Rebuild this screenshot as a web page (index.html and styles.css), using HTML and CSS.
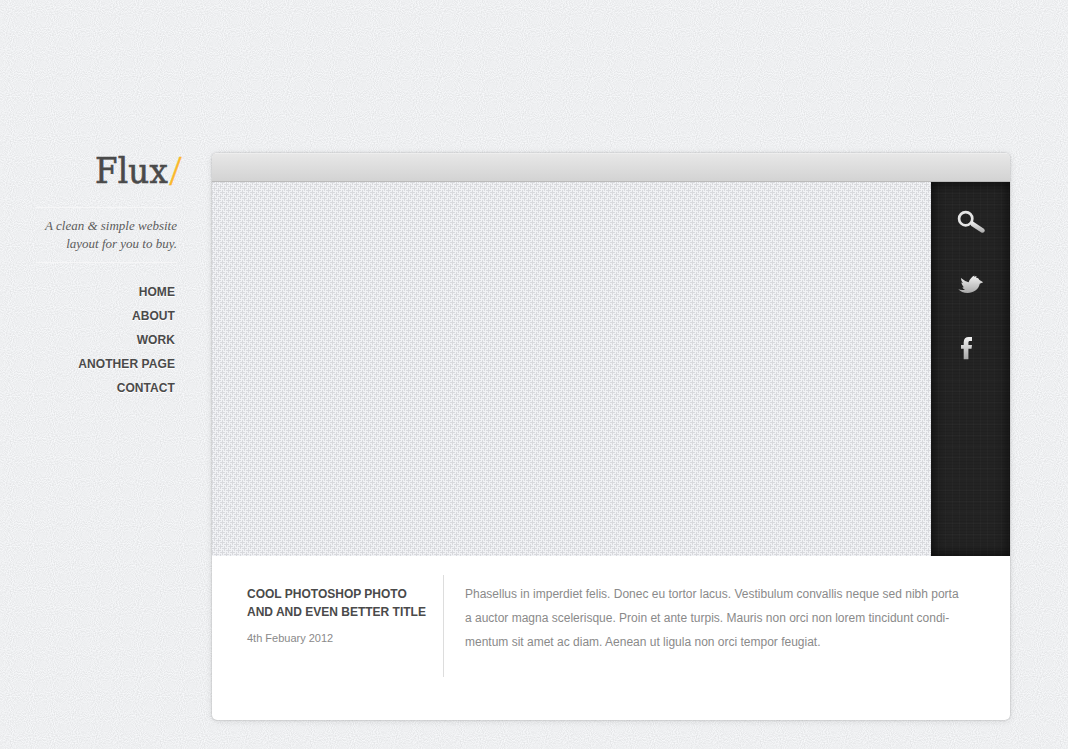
FILE: index.html
```html
<!DOCTYPE html>
<html lang="en">
  <head>
    <meta charset="utf-8">
    <title>Flux/</title>
    <link rel="stylesheet" href="styles.css">
  </head>
  <body>
    <div class="page">
      <div class="sidebar">
        <h1 class="logo"><span class="logo-name">Flux</span><span class="slash">/</span></h1>
        <p class="tagline">A clean &amp; simple website<br>layout for you to buy.</p>
        <ul class="nav">
          <li><a href="#">Home</a></li>
          <li><a href="#">About</a></li>
          <li><a href="#">Work</a></li>
          <li><a href="#">Another page</a></li>
          <li><a href="#">Contact</a></li>
        </ul>
      </div>

      <div class="main">
        <div class="topbar"></div>
        <div class="feature">
          <div class="photo"></div>
          <div class="social">
            <svg class="icon" width="32" height="28" viewBox="0 0 32 28">
              <defs>
                <linearGradient id="silver" x1="0" y1="0" x2="0" y2="1">
                  <stop offset="0" stop-color="#f2f2f2"/>
                  <stop offset="1" stop-color="#a8a8a8"/>
                </linearGradient>
              </defs>
              <circle cx="10.7" cy="9.7" r="6.6" fill="none" stroke="#e4e4e4" stroke-width="2.7"/>
              <path d="M15.4 15L17.6 12.3L28.9 19.8Q30.5 21.1 29.4 22.8Q28.1 24.5 26.3 23.5L16 16.8Z" fill="url(#silver)"/>
            </svg>
            <svg class="icon" width="32" height="28" viewBox="0 0 32 28">
              <path d="M3.3 17.2Q7.2 18.6 10 17.4Q8 16.8 7.3 15.4L8.8 15.2Q7 13.2 6.2 10.6L7.9 11Q6 8.4 5.9 5.9Q9.6 9 13.6 10.2C14.6 7 17 4.6 19.4 3.4L19.1 4.8L21.6 4L21 5.5Q23.6 5.8 24.5 8L28.2 10.3L24.8 11.8C23.6 17.8 18.2 21.1 12.4 21Q6.6 20.8 3.3 17.2Z" fill="url(#silver)"/>
            </svg>
            <svg class="icon" width="32" height="28" viewBox="0 0 32 28">
              <path d="M8.7 24.3V13.7H6V9.9H8.7V7.2C8.7 3.7 10.6 2 13.7 2H17V6H15C13.8 6 13.4 6.5 13.4 7.6V9.9H17L16.5 13.7H13.4V24.3Z" fill="url(#silver)"/>
            </svg>
          </div>
        </div>
        <div class="post">
          <div class="post-info">
            <h2>Cool photoshop photo<br>and and even better title</h2>
            <p class="date">4th Febuary 2012</p>
          </div>
          <p class="post-text">Phasellus in imperdiet felis. Donec eu tortor lacus. Vestibulum convallis neque sed nibh porta<br>a auctor magna scelerisque. Proin et ante turpis. Mauris non orci non lorem tincidunt condi-<br>mentum sit amet ac diam. Aenean ut ligula non orci tempor feugiat.</p>
        </div>
      </div>
    </div>
  </body>
</html>
```

FILE: styles.css
```css
* {
  box-sizing: border-box;
}
body {
  margin: 0;
  height: 749px;
  overflow: hidden;
  font-family: "Liberation Sans", Arial, sans-serif;
  color: #4a4a4a;
  background-color: #ecedef;
  /* fine grain */
  background-image: url("data:image/svg+xml,%3Csvg xmlns='http://www.w3.org/2000/svg' width='150' height='150'%3E%3Cfilter id='n' x='0' y='0' width='1' height='1' color-interpolation-filters='sRGB'%3E%3CfeTurbulence type='fractalNoise' baseFrequency='.95' numOctaves='1' stitchTiles='stitch'/%3E%3CfeColorMatrix values='.15 0 0 0 .858 .15 0 0 0 .863 .15 0 0 0 .87 0 0 0 0 1'/%3E%3C/filter%3E%3Crect width='150' height='150' filter='url(%23n)'/%3E%3C/svg%3E");
}
.page {
  display: flex;
  padding-top: 153px;
}
.sidebar {
  width: 212px;
  padding-left: 36px;
  text-align: right;
}
.logo {
  display: flex;
  justify-content: flex-end;
  margin: 0 30px 0 0;
  height: 54px;
  font-family: "DejaVu Serif", serif;
  font-size: 36px;
  font-weight: 400;
  line-height: 36px;
}
.logo-name {
  font-stretch: condensed;
  letter-spacing: 0.3px;
  -webkit-text-stroke: 0.6px #4a4a4a;
}
.slash {
  margin-left: 1px;
  font-family: "Open Sans", sans-serif;
  font-size: 38px;
  font-weight: 300;
  line-height: 35px;
  color: #fbb829;
  -webkit-text-stroke: 0.5px #fbb829;
}
.tagline {
  width: 141px;
  height: 56px;
  margin: 0;
  padding-top: 9px;
  border-top: 1px solid #f6f6f7;
  border-bottom: 1px solid #f6f6f7;
  font-family: "Liberation Serif", Georgia, serif;
  font-size: 13px;
  font-style: italic;
  line-height: 18px;
  color: #5c5c5c;
  white-space: nowrap;
}
.nav {
  list-style: none;
  margin: 17px 37px 0 0;
  padding: 0;
}
.nav a {
  font-size: 12px;
  font-weight: 700;
  letter-spacing: 0.08px;
  line-height: 24px;
  color: #4a4a4a;
  text-transform: uppercase;
  text-decoration: none;
  text-shadow: 0 1px 0 #fff;
}
.nav li {
  height: 24px;
}
.main {
  width: 798px;
  height: 567px;
  border-radius: 5px;
  background: #fff;
  box-shadow: 0 0 2px rgba(0, 0, 0, 0.25), 0 1px 7px rgba(0, 0, 0, 0.1);
  overflow: hidden;
}
.topbar {
  height: 29px;
  background: linear-gradient(#e7e7e7, #d3d3d3);
  border-top: 1px solid #eee;
  border-bottom: 1px solid #bbb;
}
.feature {
  display: flex;
  height: 374px;
}
.photo {
  flex: 1;
  background-color: #f1f2f5;
  /* interlocking crosses */
  background-image: url("data:image/svg+xml,%3Csvg xmlns='http://www.w3.org/2000/svg' width='10' height='10' shape-rendering='crispEdges'%3E%3Cpath d='M-2 .5h5M.5 -2v5M8 .5h5M.5 8v5M2 2.5h5M4.5 0v5M6 4.5h5M8.5 2v5M-4 4.5h5M0 6.5h5M2.5 4v5M4 8.5h5M6.5 6v5M6.5 -4v5' stroke='%23d8d9dd'/%3E%3C/svg%3E");
}
.social {
  display: flex;
  flex-direction: column;
  gap: 35px;
  width: 79px;
  padding: 27px 0 0 24px;
  background-color: #232323;
  /* woven threads */
  background-image:
    repeating-linear-gradient(90deg, rgba(255, 255, 255, 0.02) 0 1px, transparent 1px 7px),
    repeating-linear-gradient(rgba(255, 255, 255, 0.02) 0 1px, transparent 1px 11px),
    repeating-linear-gradient(rgba(0, 0, 0, 0.08) 0 1px, transparent 1px 3px);
  box-shadow: inset 0 0 14px rgba(0, 0, 0, 0.8);
}
.icon {
  display: block;
}
.post {
  display: flex;
  padding: 19px 35px 0;
}
.post-info {
  width: 197px;
  height: 102px;
  padding-top: 10px;
  border-right: 1px solid #ddd;
  white-space: nowrap;
}
.post-info h2 {
  margin: 0;
  font-size: 12px;
  line-height: 18px;
  text-transform: uppercase;
}
.date {
  margin: 8px 0 0;
  font-size: 11px;
  line-height: 18px;
  color: #8a8a8a;
}
.post-text {
  margin: 0;
  padding: 7px 0 0 21px;
  font-size: 12px;
  line-height: 24px;
  color: #8a8a8a;
  white-space: nowrap;
}
```
